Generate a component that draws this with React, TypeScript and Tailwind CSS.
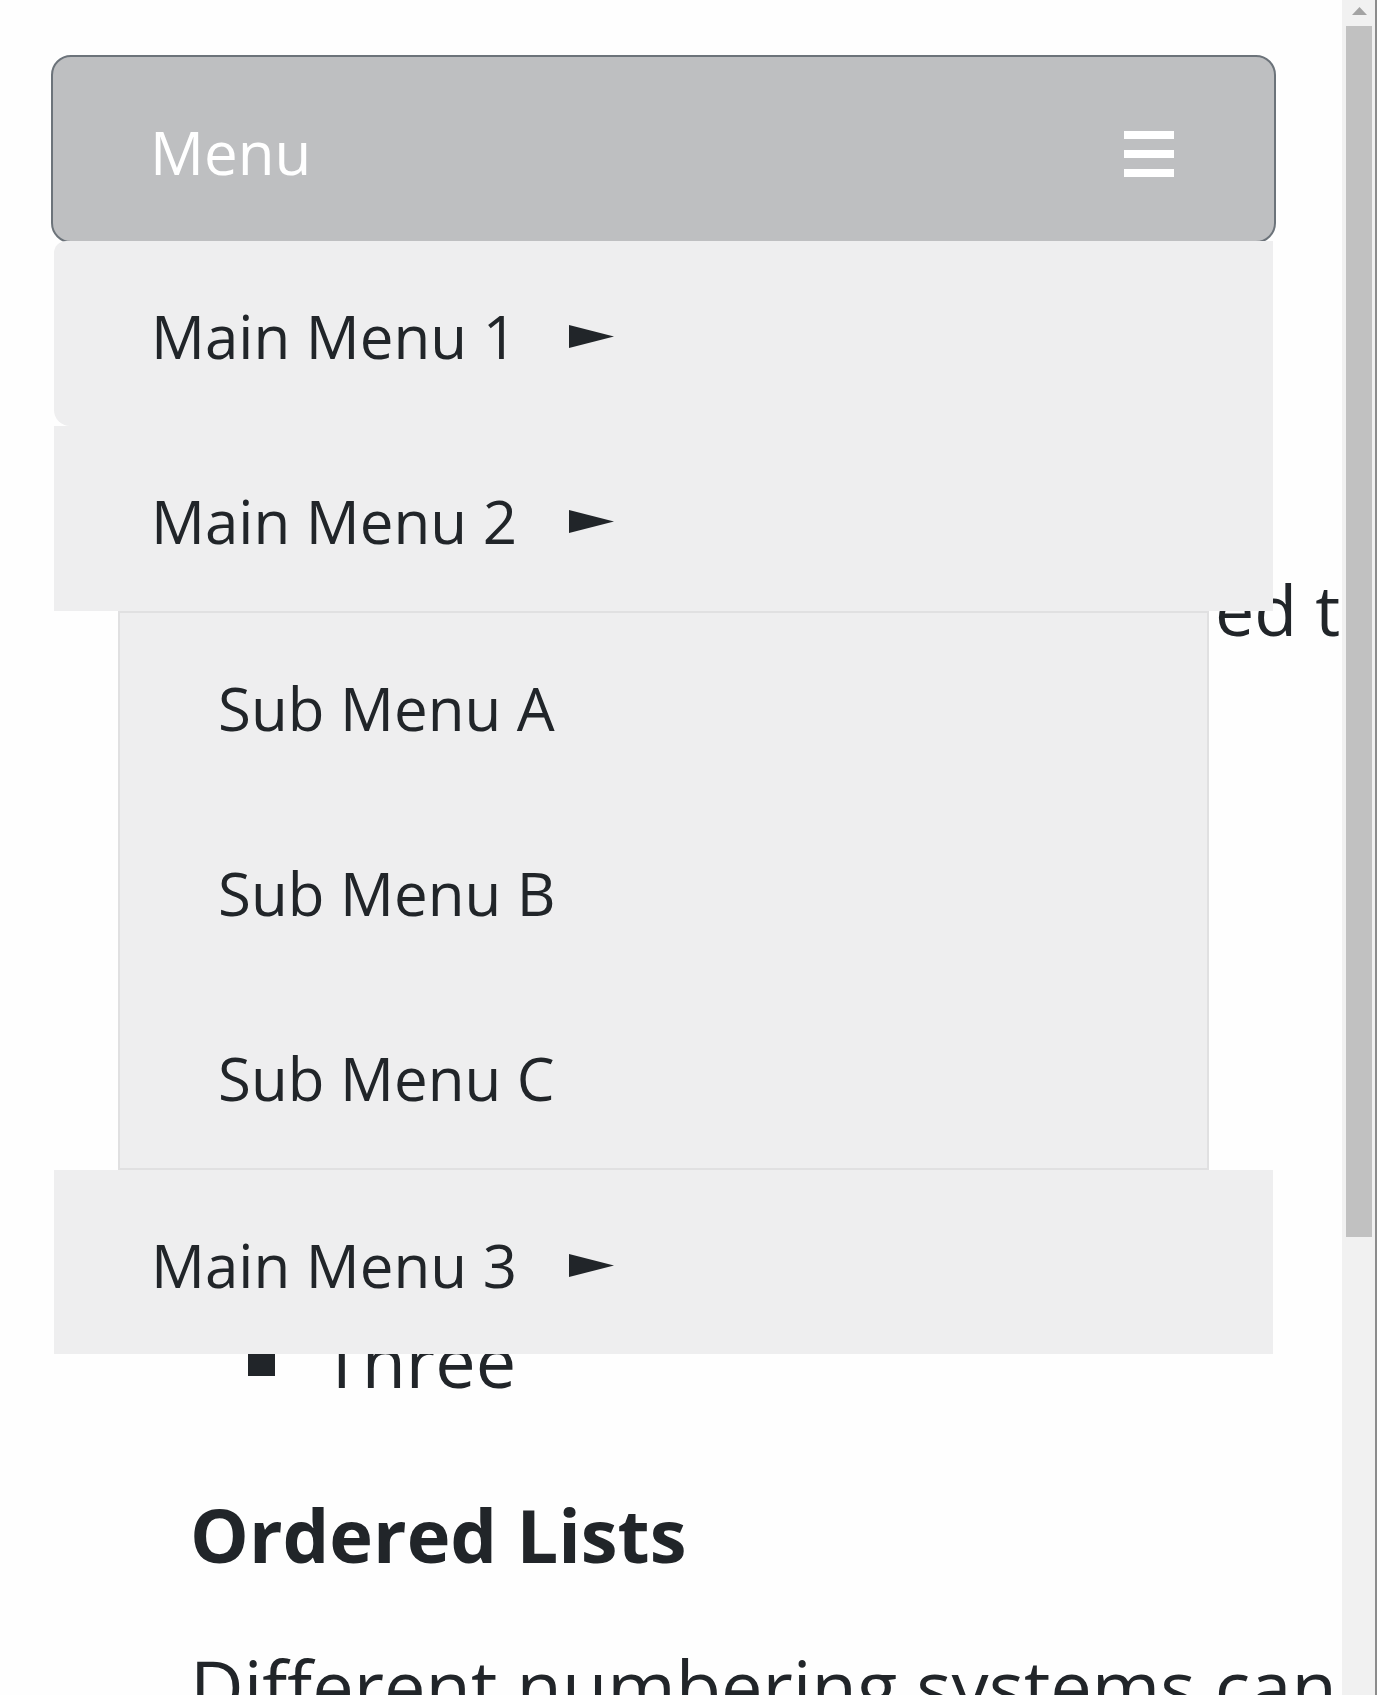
import React from 'react';

const MAIN_ITEMS = ['Main Menu 1', 'Main Menu 2', 'Main Menu 3'];
const SUB_ITEMS = ['Sub Menu A', 'Sub Menu B', 'Sub Menu C'];

function Arrow() {
  return (
    <svg className="ml-[52px] mt-[30px] shrink-0" width="45" height="23" viewBox="0 0 45 23">
      <polygon points="0,0 45,11.5 0,23" fill="#212529" />
    </svg>
  );
}

function MainItem({ label, className = '' }: { label: string; className?: string }) {
  return (
    <div className={`flex items-start bg-[#eeeeef] pl-[97px] pt-[54px] ${className}`}>
      <span className="text-[60px] leading-[82px]">{label}</span>
      <Arrow />
    </div>
  );
}

export default function App() {
  return (
    <div className="flex h-[1695px] w-full overflow-hidden bg-[#fefefe] font-['Open_Sans',sans-serif] text-[#212529]">
      {/* ── page content ── */}
      <div className="relative flex-1 overflow-hidden whitespace-nowrap">
        <div className="pl-[190px] pt-[557px]">
          <p className="flex text-[70px] leading-[105px]">
            <span className="w-[1025px] shrink-0 overflow-hidden">Unordered lists are often us</span>
            <span>ed to show a set of items in no particular order.</span>
          </p>

          <ul className="mt-[436px] pl-[58px] text-[72px] leading-[105px]">
            {['One', 'Two', 'Three'].map((item) => (
              <li key={item} className="flex items-center">
                <span className="mr-[47px] mt-[6px] h-[24px] w-[27px] bg-[#212529]" />
                {item}
              </li>
            ))}
          </ul>

          <h3 className="mt-[76px] text-[74px] font-bold leading-[91px]">Ordered Lists</h3>

          <p className="mt-[53px] text-[74px] leading-[105px]">
            Different numbering systems can be specified for ordered lists.
          </p>
        </div>

        {/* ── dropdown menu ── */}
        <div className="absolute left-[51px] top-[55px] w-[1225px]">
          <div className="flex h-[188px] items-start justify-between rounded-[20px] border-2 border-[#6c737a] bg-[#bebfc1] pl-[97px] pr-[100px] pt-[54px] text-white">
            <span className="text-[60px] leading-[82px]">Menu</span>
            <div className="mt-[20px] flex w-[50px] flex-col gap-[11px]">
              <div className="h-[8px] bg-white" />
              <div className="h-[8px] bg-white" />
              <div className="h-[8px] bg-white" />
            </div>
          </div>

          <div className="mx-[3px] -mt-[2px]">
            <MainItem label={MAIN_ITEMS[0]} className="h-[185px] rounded-bl-[16px] rounded-tl-[12px]" />
            <MainItem label={MAIN_ITEMS[1]} className="h-[185px]" />
            <div className="mx-[64px] border-2 border-[#e0e0e1] bg-[#eeeeef]">
              {SUB_ITEMS.map((sub) => (
                <div key={sub} className="h-[185px] pl-[98px] pt-[54px]">
                  <span className="text-[60px] leading-[82px]">{sub}</span>
                </div>
              ))}
            </div>
            <MainItem label={MAIN_ITEMS[2]} className="h-[184px]" />
          </div>
        </div>
      </div>

      {/* ── scrollbar ── */}
      <div className="flex w-[35px] shrink-0 flex-col border-r-2 border-[#8c8c8c] bg-[#f1f1f1] pl-[4px] pr-[3px]">
        <div className="flex h-[26px] justify-center pt-[7px]">
          <svg width="15" height="8" viewBox="0 0 15 8">
            <polygon points="7.5,0 15,8 0,8" fill="#a3a3a3" />
          </svg>
        </div>
        <div className="h-[1211px] bg-[#c1c1c1]" />
      </div>
    </div>
  );
}
